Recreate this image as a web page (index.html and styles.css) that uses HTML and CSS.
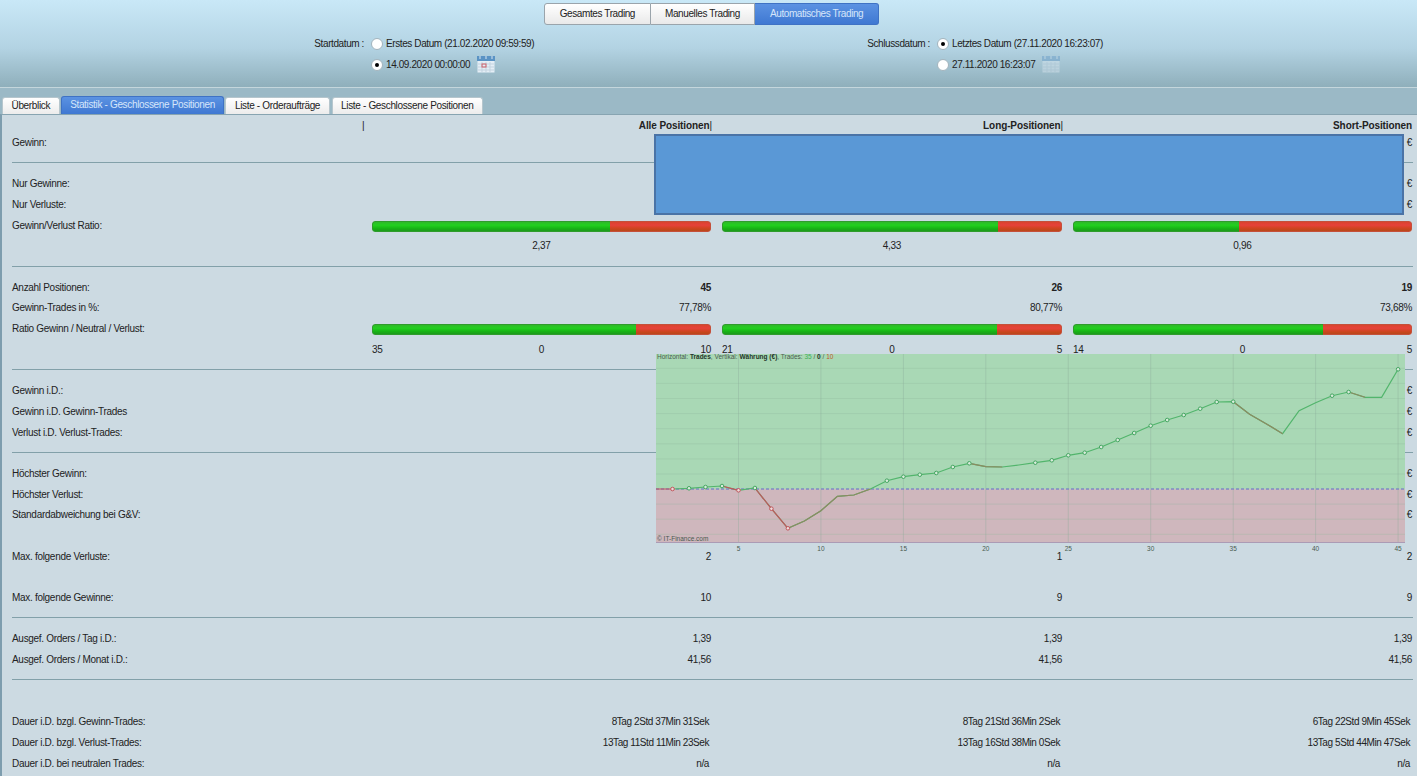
FILE: index.html
```html
<!DOCTYPE html>
<html lang="de">
<head>
    <meta charset="UTF-8">
    <title>Statistik - Geschlossene Positionen</title>
    <link rel="stylesheet" href="styles.css">
</head>
<body>
<div class="top">
    <div class="segments">
        <a class="segment">Gesamtes Trading</a>
        <a class="segment">Manuelles Trading</a>
        <a class="segment active">Automatisches Trading</a>
    </div>
    <div class="dates">
        <div class="date-label">Startdatum :</div>
        <div class="date-options">
            <label class="option"><input type="radio" name="start">Erstes Datum (21.02.2020 09:59:59)</label>
            <label class="option"><input type="radio" name="start" checked>14.09.2020 00:00:00
                <svg class="cal" width="18" height="17" viewBox="0 0 18 17"><rect x="0.5" y="0.5" width="17" height="16" fill="#e4eef6"/><rect x="0" y="0" width="18" height="5" fill="#5a93c4"/><path d="M3 0v3M9 0v3M15 0v3" stroke="#d8e6f2"/><path d="M1 8h16M1 11h16M1 14h16M5 6v10M9 6v10M13 6v10" stroke="#c3d3e0"/><rect x="5" y="8" width="4" height="3" fill="none" stroke="#d0606a"/></svg>
            </label>
        </div>
        <div class="date-label">Schlussdatum :</div>
        <div class="date-options">
            <label class="option"><input type="radio" name="end" checked>Letztes Datum (27.11.2020 16:23:07)</label>
            <label class="option"><input type="radio" name="end">27.11.2020 16:23:07
                <svg class="cal off" width="18" height="17" viewBox="0 0 18 17"><rect x="0.5" y="0.5" width="17" height="16" fill="#e4eef6"/><rect x="0" y="0" width="18" height="5" fill="#5a93c4"/><path d="M3 0v3M9 0v3M15 0v3" stroke="#d8e6f2"/><path d="M1 8h16M1 11h16M1 14h16M5 6v10M9 6v10M13 6v10" stroke="#c3d3e0"/></svg>
            </label>
        </div>
    </div>
</div>

<div class="tabs">
    <a class="tab">Überblick</a>
    <a class="tab active">Statistik - Geschlossene Positionen</a>
    <a class="tab">Liste - Orderaufträge</a>
    <a class="tab">Liste - Geschlossene Positionen</a>
</div>

<div class="panel">
    <div class="row head">
        <div></div>
        <div class="val split"><span class="pipe">|</span><span>Alle Positionen<span class="pipe">|</span></span></div>
        <div class="val">Long-Positionen<span class="pipe">|</span></div>
        <div class="val">Short-Positionen</div>
    </div>
    <div class="row"><div>Gewinn:</div><div></div><div></div><div class="val">€</div></div>
    <div class="sep"></div>
    <div class="row"><div>Nur Gewinne:</div><div></div><div></div><div class="val">€</div></div>
    <div class="row"><div>Nur Verluste:</div><div></div><div></div><div class="val">€</div></div>
    <div class="row">
        <div>Gewinn/Verlust Ratio:</div>
        <div class="val"><div class="bar"><span class="win" style="width:70.3%"></span><span class="loss"></span></div></div>
        <div class="val"><div class="bar"><span class="win" style="width:81.2%"></span><span class="loss"></span></div></div>
        <div class="val"><div class="bar"><span class="win" style="width:49%"></span><span class="loss"></span></div></div>
    </div>
    <div class="row">
        <div></div>
        <div class="val mid">2,37</div>
        <div class="val mid">4,33</div>
        <div class="val mid">0,96</div>
    </div>
    <div class="sep"></div>
    <div class="row"><div>Anzahl Positionen:</div><div class="val"><b>45</b></div><div class="val"><b>26</b></div><div class="val"><b>19</b></div></div>
    <div class="row"><div>Gewinn-Trades in %:</div><div class="val">77,78%</div><div class="val">80,77%</div><div class="val">73,68%</div></div>
    <div class="row">
        <div>Ratio Gewinn / Neutral / Verlust:</div>
        <div class="val"><div class="bar low"><span class="win" style="width:77.8%"></span><span class="loss"></span></div></div>
        <div class="val"><div class="bar low"><span class="win" style="width:80.8%"></span><span class="loss"></span></div></div>
        <div class="val"><div class="bar low"><span class="win" style="width:73.7%"></span><span class="loss"></span></div></div>
    </div>
    <div class="row">
        <div></div>
        <div class="val tri"><span>35</span><span>0</span><span>10</span></div>
        <div class="val tri"><span>21</span><span>0</span><span>5</span></div>
        <div class="val tri"><span>14</span><span>0</span><span>5</span></div>
    </div>
    <div class="sep"></div>
    <div class="row"><div>Gewinn i.D.:</div><div></div><div></div><div class="val">€</div></div>
    <div class="row"><div>Gewinn i.D. Gewinn-Trades</div><div></div><div></div><div class="val">€</div></div>
    <div class="row"><div>Verlust i.D. Verlust-Trades:</div><div></div><div></div><div class="val">€</div></div>
    <div class="sep"></div>
    <div class="row"><div>Höchster Gewinn:</div><div></div><div></div><div class="val">€</div></div>
    <div class="row"><div>Höchster Verlust:</div><div></div><div></div><div class="val">€</div></div>
    <div class="row"><div>Standardabweichung bei G&amp;V:</div><div></div><div></div><div class="val">€</div></div>
    <div class="row"></div>
    <div class="row"><div>Max. folgende Verluste:</div><div class="val">2</div><div class="val">1</div><div class="val">2</div></div>
    <div class="row"></div>
    <div class="row"><div>Max. folgende Gewinne:</div><div class="val">10</div><div class="val">9</div><div class="val">9</div></div>
    <div class="sep"></div>
    <div class="row"><div>Ausgef. Orders / Tag i.D.:</div><div class="val">1,39</div><div class="val">1,39</div><div class="val">1,39</div></div>
    <div class="row"><div>Ausgef. Orders / Monat i.D.:</div><div class="val">41,56</div><div class="val">41,56</div><div class="val">41,56</div></div>
    <div class="sep"></div>
    <div class="row"></div>
    <div class="row"><div>Dauer i.D. bzgl. Gewinn-Trades:</div><div class="val time">8Tag 2Std 37Min 31Sek</div><div class="val time">8Tag 21Std 36Min 2Sek</div><div class="val time">6Tag 22Std 9Min 45Sek</div></div>
    <div class="row"><div>Dauer i.D. bzgl. Verlust-Trades:</div><div class="val time">13Tag 11Std 11Min 23Sek</div><div class="val time">13Tag 16Std 38Min 0Sek</div><div class="val time">13Tag 5Std 44Min 47Sek</div></div>
    <div class="row"><div>Dauer i.D. bei neutralen Trades:</div><div class="val time">n/a</div><div class="val time">n/a</div><div class="val time">n/a</div></div>

    <!-- verdeckter Bereich ueber den Werten -->
    <div class="mask"></div>

    <!-- Equity-Kurve liegt ueber der Tabelle -->
    <svg class="chart" width="749" height="200" viewBox="0 0 749 200">
        <rect width="749" height="135" fill="#a9d8b5"/>
        <rect y="135" width="749" height="54" fill="#cfb7bd"/>
        <path d="M0 14.3H749M0 29.4H749M0 44.5H749M0 59.6H749M0 74.7H749M0 89.8H749M0 104.9H749M0 120H749M0 150.1H749M0 165.2H749M0 180.3H749" stroke="#8fb59b" stroke-opacity=".3"/>
        <path d="M82.5 0V189M164.9 0V189M247.4 0V189M329.8 0V189M412.3 0V189M494.7 0V189M577.2 0V189M659.6 0V189M742.1 0V189" stroke="#8aa898" stroke-opacity=".35"/>
        <path d="M0 188.5H749" stroke="#ab9bb5"/>
        <path d="M0 135H749" stroke="#7f8cc4" stroke-width="1.5" stroke-dasharray="3 2"/>
        <polyline fill="none" stroke="#52b56c" stroke-width="1.2" points="16.5,135 33,134.3 49.5,133 66,132 82.5,136.3 98.9,134 115.4,154.7 131.9,174.3 148.4,167 164.9,156.7 181.4,142.3 197.9,141 214.4,135 230.9,126.7 247.4,122.7 263.8,120.7 280.3,119 296.8,113 313.3,109.3 329.8,112.7 346.3,113 362.8,111 379.3,108.7 395.8,106.3 412.3,101.3 428.7,98.7 445.2,93 461.7,86 478.2,79 494.7,71.7 511.2,66 527.7,61 544.2,54.7 560.7,48 577.2,47.7 593.6,60.3 610.1,69.7 626.6,79.7 643.1,56.7 659.6,48.7 676.1,41.7 692.6,38 709.1,43.3 725.6,43.3 742.1,15.3"/>
        <path d="M0 135H16.5M66 132L82.5 136.3M98.9 134L115.4 154.7L131.9 174.3" fill="none" stroke="#c2555c" stroke-width="1.2"/>
        <path d="M131.9 174.3L148.4 167L164.9 156.7L181.4 142.3L197.9 141L214.4 135M313.3 109.3L329.8 112.7L346.3 113M577.2 47.7L593.6 60.3L610.1 69.7L626.6 79.7M692.6 38L709.1 43.3" fill="none" stroke="#8d8a62" stroke-width="1.2"/>
        <g fill="#d9ecdc" stroke="#45a662">
            <circle cx="33" cy="134.3" r="1.8"/><circle cx="49.5" cy="133" r="1.8"/><circle cx="66" cy="132" r="1.8"/><circle cx="98.9" cy="134" r="1.8"/>
            <circle cx="230.9" cy="126.7" r="1.8"/><circle cx="247.4" cy="122.7" r="1.8"/><circle cx="263.8" cy="120.7" r="1.8"/><circle cx="280.3" cy="119" r="1.8"/><circle cx="296.8" cy="113" r="1.8"/><circle cx="313.3" cy="109.3" r="1.8"/>
            <circle cx="379.3" cy="108.7" r="1.8"/><circle cx="395.8" cy="106.3" r="1.8"/><circle cx="412.3" cy="101.3" r="1.8"/><circle cx="428.7" cy="98.7" r="1.8"/><circle cx="445.2" cy="93" r="1.8"/><circle cx="461.7" cy="86" r="1.8"/><circle cx="478.2" cy="79" r="1.8"/><circle cx="494.7" cy="71.7" r="1.8"/><circle cx="511.2" cy="66" r="1.8"/><circle cx="527.7" cy="61" r="1.8"/><circle cx="544.2" cy="54.7" r="1.8"/><circle cx="560.7" cy="48" r="1.8"/><circle cx="577.2" cy="47.7" r="1.8"/>
            <circle cx="676.1" cy="41.7" r="1.8"/><circle cx="692.6" cy="38" r="1.8"/><circle cx="742.1" cy="15.3" r="1.8"/>
        </g>
        <g fill="#ecdcdc" stroke="#c2555c">
            <circle cx="16.5" cy="135" r="1.8"/><circle cx="82.5" cy="136.3" r="1.8"/><circle cx="115.4" cy="154.7" r="1.8"/><circle cx="131.9" cy="174.3" r="1.8"/>
        </g>
        <text class="chart-text" x="1" y="5">Horizontal: <tspan class="strong">Trades</tspan>, Vertikal: <tspan class="strong">Währung (€)</tspan>, Trades: <tspan fill="#3fae5a">35</tspan> / <tspan class="strong">0</tspan> / <tspan fill="#c0562c">10</tspan></text>
        <text class="chart-text" x="1" y="187">© IT-Finance.com</text>
        <g class="chart-text axis">
            <text x="82.5" y="197">5</text><text x="164.9" y="197">10</text><text x="247.4" y="197">15</text><text x="329.8" y="197">20</text><text x="412.3" y="197">25</text><text x="494.7" y="197">30</text><text x="577.2" y="197">35</text><text x="659.6" y="197">40</text><text x="742.1" y="197">45</text>
        </g>
    </svg>
</div>
</body>
</html>
```

FILE: styles.css
```css
* {
    box-sizing: border-box;
}

html, body {
    height: 100%;
}

body {
    margin: 0;
    display: flex;
    flex-direction: column;
    overflow: hidden;
    background: #ccdae2;
    color: #222;
    font: 10px/12px "Liberation Sans", Arial, sans-serif;
    letter-spacing: -.3px;
}

/* oberer Bereich */
.top {
    height: 88px;
    padding-top: 3px;
    letter-spacing: -.4px;
    background: linear-gradient(#c9e8f7, #b3d3e3 55%, #8fafbb);
    border-bottom: 1px solid #c4d6dc;
}

.segments {
    display: flex;
    justify-content: center;
    padding-left: 6px;
}

.segment {
    height: 22px;
    line-height: 20px;
    padding: 0 14.5px;
    border: 1px solid #9aa4ab;
    border-left-width: 0;
    background: linear-gradient(#fff, #e9e9e9);
}

.segment:first-child {
    border-left-width: 1px;
    border-radius: 3px 0 0 3px;
}

.segment:last-child {
    border-radius: 0 3px 3px 0;
}

.segment.active {
    color: #d6e6fa;
    border-color: #3f72c4;
    background: linear-gradient(#5b92e2, #3f78d2);
}

.dates {
    display: grid;
    grid-template-columns: 364px 503px 63px 1fr;
    margin-top: 8px;
}

.date-label {
    height: 21px;
    line-height: 21px;
    text-align: right;
    white-space: nowrap;
}

.date-options {
    padding-left: 7px;
}

.option {
    display: flex;
    align-items: center;
    height: 21px;
    white-space: nowrap;
}

.option input {
    appearance: none;
    flex: none;
    position: relative;
    width: 12px;
    height: 12px;
    margin: 0 3px 0 0;
    border: 1px solid #a3b4bd;
    border-radius: 50%;
    background: #fff;
}

.option input:checked::after {
    content: "";
    position: absolute;
    left: 3px;
    top: 3px;
    width: 4px;
    height: 4px;
    border-radius: 50%;
    background: #000;
}

.cal {
    flex: none;
    margin-left: 7px;
}

.cal.off {
    opacity: .4;
}

/* Tabs */
.tabs {
    display: flex;
    align-items: flex-end;
    gap: 1px;
    height: 26px;
    padding-left: 2px;
    letter-spacing: -.34px;
    background: #9bb9c6;
}

.tab {
    height: 17px;
    line-height: 16px;
    padding: 0 8.5px;
    border: 1px solid #b6c6cd;
    border-bottom: 0;
    border-radius: 3px 3px 0 0;
    background: linear-gradient(#fff, #ececec);
}

.tab.active {
    height: 18px;
    color: #d6e6fa;
    border-color: #3f72c4;
    background: linear-gradient(#5b92e2, #3f78d2);
}

.tab:last-child {
    margin-left: 1px;
}

/* Tabelle */
.panel {
    flex: 1;
    position: relative;
    padding: 0 4px 0 10px;
    border-top: 1px solid #87a4b1;
    border-left: 2px solid #7d9dae;
}

.row {
    display: grid;
    grid-template-columns: 350px 350px 351px 350px;
    align-items: center;
    height: 20.7px;
    padding-top: 2px;
    white-space: nowrap;
}

.row.head {
    height: 16.65px;
    padding-top: 0;
    align-items: end;
    letter-spacing: -.1px;
    font-weight: bold;
}

.pipe {
    font-weight: normal;
}

.val {
    padding: 0 1px 0 10px;
    text-align: right;
}

.head .val {
    padding-right: 0;
}

.head .val:last-child {
    padding-right: 1px;
}

.val.mid {
    text-align: center;
}

.val.time {
    padding-right: 3px;
    letter-spacing: -.42px;
}

.val.split {
    display: flex;
    justify-content: space-between;
}

.val.tri {
    display: grid;
    grid-template-columns: 1fr auto 1fr;
}

.val.tri span:first-child {
    text-align: left;
}

.head .val.split {
    padding-left: 0;
}

.sep {
    display: flex;
    align-items: center;
    height: 20.7px;
}

.sep::before {
    content: "";
    flex: 1;
    border-top: 1px solid #82a0a9;
}

.bar {
    display: flex;
    height: 11px;
    margin-top: 2px;
    overflow: hidden;
    border-radius: 3px;
}

.bar.low {
    margin-top: 1px;
}

.win {
    border: 1px solid #2f9c2c;
    border-right: 0;
    border-radius: 3px 0 0 3px;
    background: linear-gradient(#2fb82a, #22d01f 35%, #17b515 70%, #1c9a1c);
}

.loss {
    flex: 1;
    border: 1px solid #c4503a;
    border-left: 0;
    border-radius: 0 3px 3px 0;
    background: linear-gradient(#d9442f, #e6423a 35%, #cf4520 70%, #b8481a);
}

/* Overlays */
.mask {
    position: absolute;
    left: 652px;
    top: 19px;
    width: 750px;
    height: 81px;
    border: 2px solid #4a73a6;
    background: #5a98d6;
}

.chart {
    position: absolute;
    left: 654px;
    top: 239px;
    letter-spacing: 0;
}

.chart-text {
    font: 6.5px "Liberation Sans", Arial, sans-serif;
    fill: #4a5a50;
}

.chart-text .strong {
    font-weight: bold;
    fill: #24352a;
}

.axis text {
    text-anchor: middle;
}
```
